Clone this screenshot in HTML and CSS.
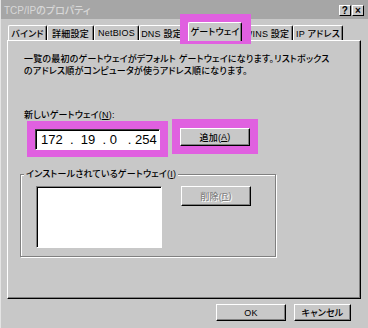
FILE: index.html
```html
<!DOCTYPE html>
<html lang="ja">
<head>
    <meta charset="UTF-8">
    <title>TCP/IPのプロパティ</title>
    <link rel="stylesheet" href="styles.css">
</head>
<body>
    <div class="window">
        <div class="titlebar">
            <span class="title">TCP/IPのプロパティ</span>
            <div class="caption-buttons">
                <span class="caption-btn">?</span>
                <span class="caption-btn">×</span>
            </div>
        </div>
        <div class="tabs">
            <div class="tab tab-bind">バインド</div>
            <div class="tab tab-detail">詳細設定</div>
            <div class="tab tab-netbios">NetBIOS</div>
            <div class="tab tab-dns">DNS 設定</div>
            <div class="tab-active">
                <div class="tab-face">ゲートウェイ</div>
            </div>
            <div class="tab tab-wins">WINS 設定</div>
            <div class="tab tab-ip">IP アドレス</div>
        </div>
        <div class="panel">
            <p class="desc">
                一覧の最初のゲートウェイがデフォルト ゲートウェイになります。リストボックス<br>
                のアドレス順がコンピュータが使うアドレス順になります。
            </p>
            <p class="field-label">新しいゲートウェイ(<u>N</u>):</p>
            <div class="gw-row">
                <div class="mark mark-input">
                    <div class="ip-input">172  .  19  . 0   . 254</div>
                </div>
                <div class="mark mark-button">
                    <div class="btn">追加(<u>A</u>)</div>
                </div>
            </div>
            <div class="group">
                <span class="group-title">インストールされているゲートウェイ(<u>I</u>)</span>
                <div class="listbox"></div>
                <div class="btn btn-disabled">削除(<u>R</u>)</div>
            </div>
        </div>
        <div class="footer">
            <div class="btn btn-ok">OK</div>
            <div class="btn btn-cancel">キャンセル</div>
        </div>
    </div>
</body>
</html>
```

FILE: styles.css
```css
* {
    box-sizing: border-box;
}
body {
    margin: 0;
    background: #c8c8c8;
    color: #000;
    font-family: "Liberation Sans", "Noto Sans CJK JP", sans-serif;
    font-size: 9px;
    font-weight: 500;
    letter-spacing: 0.2px;
    font-feature-settings: "palt";
}
p {
    margin: 0;
}
.window {
    width: 368px;
    height: 328px;
    background: #c8c8c8;
    border-left: 1px solid #e4e4e4;
}
/* Title bar (inactive) */
.titlebar {
    height: 19px;
    background: #a6a6a6;
    color: #d8d8d8;
    display: flex;
    align-items: center;
    justify-content: space-between;
    padding: 0 4px 0 3px;
}
.title {
    font-size: 10px;
    letter-spacing: 0;
}
.caption-buttons {
    display: flex;
    gap: 1px;
    margin-top: 2px;
}
.caption-btn {
    width: 12px;
    height: 11px;
    background: #c8c8c8;
    border: 1px solid;
    border-color: #fff #000 #000 #fff;
    color: #000;
    font: bold 10px "Liberation Sans", sans-serif;
    line-height: 9px;
    text-align: center;
}
/* Tabs */
.tabs {
    display: flex;
    align-items: flex-end;
    height: 19px;
    margin-top: 3px;
    margin-bottom: -1px;
    padding-left: 7px;
}
.tab {
    height: 15px;
    margin-bottom: 1px;
    border: 1px solid #fff;
    border-bottom: none;
    border-right-color: #000;
    border-radius: 2px 2px 0 0;
    box-shadow: inset -1px 0 0 #808080;
    display: flex;
    align-items: center;
    justify-content: center;
    white-space: nowrap;
}
.tab-bind { width: 39px; }
.tab-detail { width: 47px; }
.tab-netbios { width: 45px; }
.tab-dns {
    width: 51px;
    padding-right: 6px;
}
.tab-wins { width: 53px; }
.tab-ip { width: 50px; }
.tab-active {
    position: relative;
    z-index: 1;
    width: 50px;
    height: 19px;
}
/* highlight marker */
.tab-active::before {
    content: "";
    position: absolute;
    left: -10px;
    right: -11px;
    top: -8px;
    bottom: -3px;
    background: #e060e0;
}
.tab-face {
    position: relative;
    height: 19px;
    margin: 0 -2px;
    background: #c8c8c8;
    border: 1px solid #fff;
    border-bottom: none;
    border-right-color: #000;
    border-radius: 2px 2px 0 0;
    box-shadow: inset -1px 0 0 #808080;
    display: flex;
    align-items: center;
    justify-content: center;
    padding-bottom: 2px;
}
/* Panel */
.panel {
    height: 259px;
    margin: 0 7px 0 6px;
    padding: 12px 0 0 16px;
    border: 1px solid #fff;
    border-right-color: #000;
    border-bottom-color: #000;
    box-shadow: inset -1px -1px 0 #808080;
}
.desc {
    line-height: 12px;
    white-space: nowrap;
}
.field-label {
    margin-top: 32px;
    line-height: 12px;
}
.gw-row {
    display: flex;
    align-items: flex-start;
    gap: 4px;
    margin-left: 3px;
}
.mark {
    background: #e060e0;
}
.mark-input {
    padding: 8px 8px 7px;
}
.mark-button {
    padding: 9px 8px 8px;
    margin-top: -2px;
}
.ip-input {
    width: 125px;
    height: 21px;
    background: #fff;
    border: 1px solid;
    border-color: #404040 #fff #fff #404040;
    box-shadow: inset 1px 1px 0 #000;
    padding-left: 5px;
    font: 13px "Liberation Sans", sans-serif;
    letter-spacing: 0;
    line-height: 19px;
    white-space: pre;
}
.btn {
    width: 70px;
    height: 18px;
    background: #c8c8c8;
    border: 1px solid;
    border-color: #fff #000 #000 #fff;
    box-shadow: inset -1px -1px 0 #808080;
    display: flex;
    align-items: center;
    justify-content: center;
    white-space: nowrap;
}
/* Group box */
.group {
    position: relative;
    width: 256px;
    height: 83px;
    margin: 17px 0 0 -4px;
    padding: 11px 0 0 15px;
    border: 1px solid #808080;
    box-shadow: inset 1px 1px 0 #fff, 1px 1px 0 #fff;
    display: flex;
    align-items: flex-start;
    gap: 19px;
}
.group-title {
    position: absolute;
    top: -7px;
    left: 3px;
    padding: 0 2px;
    background: #c8c8c8;
    line-height: 12px;
    white-space: nowrap;
}
.listbox {
    width: 126px;
    height: 62px;
    background: #fff;
    border: 1px solid;
    border-color: #808080 #fff #fff #808080;
    box-shadow: inset 1px 1px 0 #000;
}
.btn-disabled {
    height: 20px;
    color: #808080;
    text-shadow: 1px 1px 0 #fff;
}
/* Dialog buttons */
.footer {
    display: flex;
    justify-content: flex-end;
    gap: 8px;
    padding: 5px 17px 0 0;
}
.btn-ok {
    height: 17px;
}
.btn-cancel {
    width: 57px;
    height: 17px;
}
```
